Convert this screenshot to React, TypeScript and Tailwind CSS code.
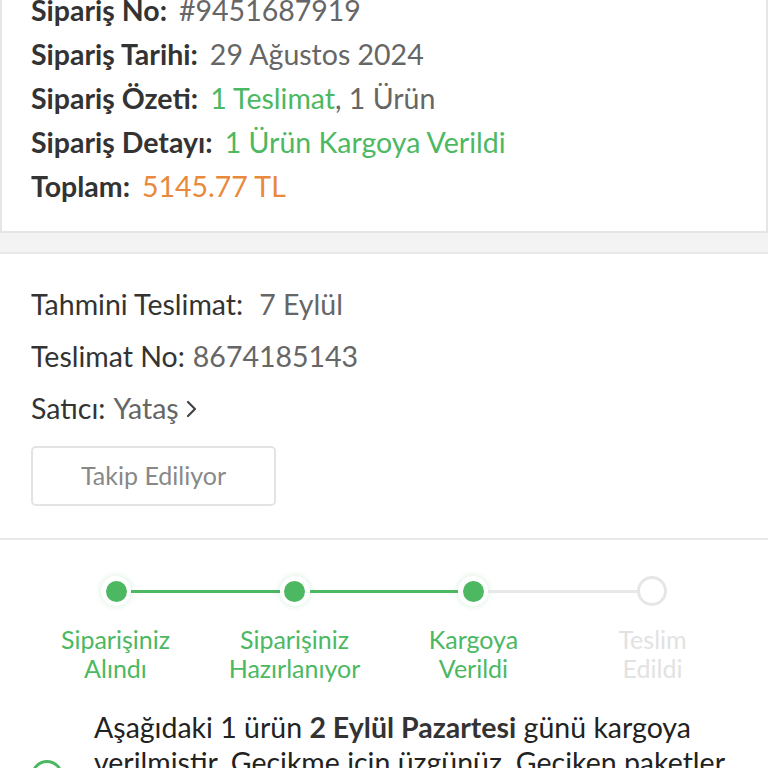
import React from "react";

const font = { fontFamily: "Lato, 'Noto Sans', sans-serif" };

function Dot({ done }: { done: boolean }) {
  if (done) {
    return (
      <div className="w-[30px] h-[30px] rounded-full bg-white shadow-[0_0_4px_2px_rgba(76,184,98,0.12)] flex items-center justify-center shrink-0">
        <div className="w-[21px] h-[21px] rounded-full bg-[#4cb862]" />
      </div>
    );
  }
  return (
    <div className="w-[30px] h-[30px] rounded-full bg-white border-[3px] border-[#e6e6e6] shrink-0" />
  );
}

export default function App() {
  return (
    <div className="w-[768px] h-[768px] overflow-hidden bg-white text-[#333]" style={font}>
      {/* Top card */}
      <div className="border-x-2 border-b-2 border-[#e5e5e5] bg-white pl-[29px] pb-[23px]">
        <div className="mt-[-12px] flex flex-col text-[28.5px] leading-[44px]">
          <div>
            <span className="font-bold text-[#333]">Sipariş No:</span>
            <span className="text-[#666] ml-[12px]">#9451687919</span>
          </div>
          <div>
            <span className="font-bold text-[#333]">Sipariş Tarihi:</span>
            <span className="text-[#666] ml-[12px]">29 Ağustos 2024</span>
          </div>
          <div>
            <span className="font-bold text-[#333]">Sipariş Özeti:</span>
            <span className="text-[#4cb862] ml-[12px]">1 Teslimat</span>
            <span className="text-[#666]">, 1 Ürün</span>
          </div>
          <div>
            <span className="font-bold text-[#333]">Sipariş Detayı:</span>
            <span className="text-[#4cb862] ml-[12px]">1 Ürün Kargoya Verildi</span>
          </div>
          <div>
            <span className="font-bold text-[#333]">Toplam:</span>
            <span className="text-[#e8893c] ml-[12px]">5145.77 TL</span>
          </div>
        </div>
      </div>

      {/* Gray band */}
      <div className="h-[21px] bg-[#f3f3f3] border-b-2 border-[#e8e8e8]" />

      {/* Delivery section */}
      <div className="pl-[31px] pt-[24px] pb-[32px] border-b-2 border-[#e8e8e8]">
        <div className="flex flex-col text-[28.5px] leading-[52px]">
          <div>
            <span className="text-[#333]">Tahmini Teslimat:</span>
            <span className="text-[#666] ml-[16px]">7 Eylül</span>
          </div>
          <div>
            <span className="text-[#333]">Teslimat No:</span>
            <span className="text-[#666] ml-[8px]">8674185143</span>
          </div>
          <div className="flex items-center">
            <span className="text-[#333]">Satıcı:</span>
            <span className="text-[#666] ml-[8px]">Yataş</span>
            <svg width="14" height="22" viewBox="0 0 14 22" className="ml-[6px] mt-[2px]">
              <path d="M3 4 L10 11 L3 18" fill="none" stroke="#444" strokeWidth="2.2" strokeLinecap="round" strokeLinejoin="round" />
            </svg>
          </div>
        </div>
        <button className="mt-[12px] w-[245px] h-[60px] border-2 border-[#e3e3e3] rounded-[5px] text-[25px] text-[#888] bg-white">
          Takip Ediliyor
        </button>
      </div>

      {/* Stepper */}
      <div className="pt-[36px]">
        <div className="flex items-center px-[101px]">
          <Dot done />
          <div className="flex-1 h-[3px] bg-[#4cb862]" />
          <Dot done />
          <div className="flex-1 h-[3px] bg-[#4cb862]" />
          <Dot done />
          <div className="flex-1 h-[3px] bg-[#e8e8e8]" />
          <Dot done={false} />
        </div>
        <div className="grid grid-cols-4 px-[26px] mt-[19px] text-center text-[25px] leading-[29px]">
          <div className="text-[#4cb862]">Siparişiniz<br />Alındı</div>
          <div className="text-[#4cb862]">Siparişiniz<br />Hazırlanıyor</div>
          <div className="text-[#4cb862]">Kargoya<br />Verildi</div>
          <div className="text-[#e2e2e2]">Teslim<br />Edildi</div>
        </div>

        <div className="flex mt-[27px] pr-[22px]">
          <div className="w-[94px] shrink-0 flex justify-center pt-[50px]">
            <div className="w-[32px] h-[32px] rounded-full border-[3px] border-[#4cb862]" />
          </div>
          <p className="text-[28.5px] leading-[35px] text-[#222]">
            Aşağıdaki 1 ürün <span className="font-bold text-[#333]">2 Eylül Pazartesi</span> günü kargoya verilmiştir. Gecikme için üzgünüz. Geciken paketler için ek kargo süresi tanımlanmıştır.
          </p>
        </div>
      </div>
    </div>
  );
}
